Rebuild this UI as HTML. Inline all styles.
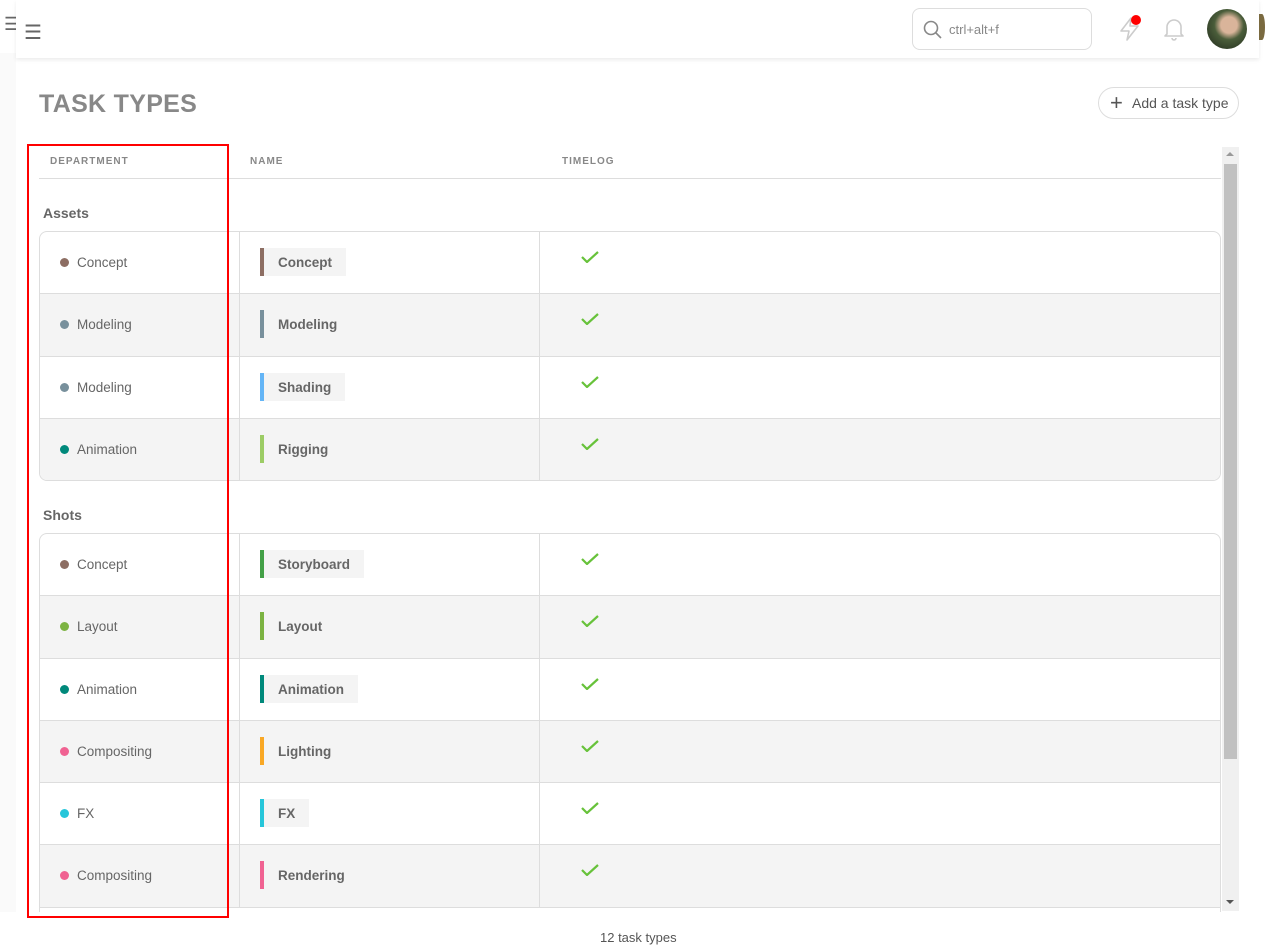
<!DOCTYPE html>
<html><head><meta charset="utf-8"><style>
*{box-sizing:border-box;margin:0;padding:0}
body{width:1275px;height:948px;overflow:hidden;background:#fff;font-family:"Liberation Sans",sans-serif;position:relative;color:#666}
.side{position:absolute;top:0;width:16px;height:948px;background:#fafafa}
.top{position:absolute;left:16px;top:0;width:1243px;height:58px;background:#fff;box-shadow:0 2px 4px rgba(0,0,0,.08)}
.ham{position:absolute;font-size:20px;color:#666}
.search{position:absolute;left:912px;top:8px;width:180px;height:42px;border:1px solid #ddd;border-radius:8px}
.search span{position:absolute;left:36px;top:13px;font-size:13px;color:#888}
h1{position:absolute;left:39px;top:90px;font-size:25px;font-weight:bold;color:#888;letter-spacing:0.3px}
.btn{position:absolute;left:1098px;top:87px;width:141px;height:32px;border:1px solid #ddd;border-radius:16px;font-size:14px;color:#555;padding:7px 0 0 33px}
.btn:before{content:"+";position:absolute;left:11px;top:2px;font-size:22px;color:#555}
.th{position:absolute;top:156px;font-size:10px;font-weight:bold;letter-spacing:1px;color:#888}
.hl{position:absolute;left:39px;top:178px;width:1182px;height:1px;background:#ddd}
.grp{position:absolute;left:43px;font-size:14px;font-weight:bold;color:#666}
.box{position:absolute;left:39px;width:1182px;border:1px solid #ddd;border-radius:8px;overflow:hidden}
.row{height:62.3px;border-bottom:1px solid #ddd;position:relative}
.row:last-child{border-bottom:none}
.row.g{background:#f4f4f4}
.c1,.c2{position:absolute;top:0;height:100%;border-right:1px solid #ddd}
.c1{left:0;width:200px}.c2{left:200px;width:300px}
.dot{position:absolute;left:20px;top:26px;width:9px;height:9px;border-radius:50%}
.dn{position:absolute;left:37px;top:23px;font-size:13.5px;color:#666}
.tag{position:absolute;left:20px;top:16px;height:28px;background:#f4f4f4;border-left:4px solid;font-size:13.5px;font-weight:bold;color:#666;padding:7px 14px 0}
.chk{position:absolute;left:541px;top:19px;width:18px;height:12px}
.sb{position:absolute;left:1222px;top:147px;width:17px;height:764px;background:#f0f0f0}
.red{position:absolute;left:27px;top:144px;width:202px;height:774px;border:2px solid #f00}
</style></head><body>
<div class="side" style="left:0"><div style="height:53px;background:#fff"></div></div>
<div class="side" style="left:1259px;background:#fff"></div>
<div class="ham" style="left:4px;top:14px;font-size:18px">☰</div>
<div class="top"></div>
<div class="ham" style="left:24px;top:20px">☰</div>
<div class="search"><svg style="position:absolute;left:10px;top:11px" width="20" height="20" viewBox="0 0 20 20"><circle cx="8" cy="8" r="6.5" fill="none" stroke="#888" stroke-width="1.6"/><line x1="13" y1="13" x2="18" y2="18" stroke="#888" stroke-width="1.6"/></svg><span>ctrl+alt+f</span></div>
<svg style="position:absolute;left:1118px;top:16px" width="24" height="26" viewBox="0 0 24 26"><path d="M13 2 L3 15 H11 L9 24 L20 10 H12 Z" fill="none" stroke="#ccc" stroke-width="1.6" stroke-linejoin="round"/></svg>
<div style="position:absolute;left:1131px;top:15px;width:10px;height:10px;border-radius:50%;background:#f00"></div>
<svg style="position:absolute;left:1163px;top:17px" width="22" height="24" viewBox="0 0 22 24"><path d="M4 17 V10 a7 7 0 0 1 14 0 V17 L20 19 H2 Z" fill="none" stroke="#ccc" stroke-width="1.6" stroke-linejoin="round"/><path d="M9 21 a2 2 0 0 0 4 0" fill="none" stroke="#ccc" stroke-width="1.6"/></svg>
<div style="position:absolute;left:1207px;top:9px;width:40px;height:40px;border-radius:50%;background:radial-gradient(circle at 55% 40%,#d9b49a 0 25%,#4a5d3a 45%,#2e3a25 80%)"></div>
<div style="position:absolute;left:1259px;top:14px;width:6px;height:26px;border-radius:0 50% 50% 0;background:#7a6a40"></div>
<h1>TASK TYPES</h1>
<div class="btn">Add a task type</div>
<div class="th" style="left:50px">DEPARTMENT</div>
<div class="th" style="left:250px">NAME</div>
<div class="th" style="left:562px">TIMELOG</div>
<div class="hl"></div>
<div class="grp" style="top:205px">Assets</div>
<div class="box" style="top:231px;height:250px">
<div class="row"><div class="c1"><div class="dot" style="background:#8d6e63"></div><div class="dn">Concept</div></div><div class="c2"><div class="tag" style="border-color:#8d6e63">Concept</div></div><svg class="chk" viewBox="0 0 18 12"><path d="M1 6 L6 11 L17 1" fill="none" stroke="#67c23a" stroke-width="2.2"/></svg></div>
<div class="row g"><div class="c1"><div class="dot" style="background:#78909c"></div><div class="dn">Modeling</div></div><div class="c2"><div class="tag" style="border-color:#78909c">Modeling</div></div><svg class="chk" viewBox="0 0 18 12"><path d="M1 6 L6 11 L17 1" fill="none" stroke="#67c23a" stroke-width="2.2"/></svg></div>
<div class="row"><div class="c1"><div class="dot" style="background:#78909c"></div><div class="dn">Modeling</div></div><div class="c2"><div class="tag" style="border-color:#64b5f6">Shading</div></div><svg class="chk" viewBox="0 0 18 12"><path d="M1 6 L6 11 L17 1" fill="none" stroke="#67c23a" stroke-width="2.2"/></svg></div>
<div class="row g"><div class="c1"><div class="dot" style="background:#00897b"></div><div class="dn">Animation</div></div><div class="c2"><div class="tag" style="border-color:#9ccc65">Rigging</div></div><svg class="chk" viewBox="0 0 18 12"><path d="M1 6 L6 11 L17 1" fill="none" stroke="#67c23a" stroke-width="2.2"/></svg></div>
</div>
<div class="grp" style="top:507px">Shots</div>
<div class="box" style="top:533px;height:400px;border-bottom:none;border-radius:8px 8px 0 0">
<div class="row"><div class="c1"><div class="dot" style="background:#8d6e63"></div><div class="dn">Concept</div></div><div class="c2"><div class="tag" style="border-color:#43a047">Storyboard</div></div><svg class="chk" viewBox="0 0 18 12"><path d="M1 6 L6 11 L17 1" fill="none" stroke="#67c23a" stroke-width="2.2"/></svg></div>
<div class="row g"><div class="c1"><div class="dot" style="background:#7cb342"></div><div class="dn">Layout</div></div><div class="c2"><div class="tag" style="border-color:#7cb342">Layout</div></div><svg class="chk" viewBox="0 0 18 12"><path d="M1 6 L6 11 L17 1" fill="none" stroke="#67c23a" stroke-width="2.2"/></svg></div>
<div class="row"><div class="c1"><div class="dot" style="background:#00897b"></div><div class="dn">Animation</div></div><div class="c2"><div class="tag" style="border-color:#00897b">Animation</div></div><svg class="chk" viewBox="0 0 18 12"><path d="M1 6 L6 11 L17 1" fill="none" stroke="#67c23a" stroke-width="2.2"/></svg></div>
<div class="row g"><div class="c1"><div class="dot" style="background:#f06292"></div><div class="dn">Compositing</div></div><div class="c2"><div class="tag" style="border-color:#f9a825">Lighting</div></div><svg class="chk" viewBox="0 0 18 12"><path d="M1 6 L6 11 L17 1" fill="none" stroke="#67c23a" stroke-width="2.2"/></svg></div>
<div class="row"><div class="c1"><div class="dot" style="background:#26c6da"></div><div class="dn">FX</div></div><div class="c2"><div class="tag" style="border-color:#26c6da">FX</div></div><svg class="chk" viewBox="0 0 18 12"><path d="M1 6 L6 11 L17 1" fill="none" stroke="#67c23a" stroke-width="2.2"/></svg></div>
<div class="row g" style="border-bottom:1px solid #ddd"><div class="c1"><div class="dot" style="background:#f06292"></div><div class="dn">Compositing</div></div><div class="c2"><div class="tag" style="border-color:#f06292">Rendering</div></div><svg class="chk" viewBox="0 0 18 12"><path d="M1 6 L6 11 L17 1" fill="none" stroke="#67c23a" stroke-width="2.2"/></svg></div>
</div>
<div style="position:absolute;left:0;top:912px;width:1275px;height:36px;background:#fff"></div>
<div class="sb"><div style="position:absolute;left:2px;top:17px;width:13px;height:595px;background:#c1c1c1"></div>
<div style="position:absolute;left:4px;top:5px;border:4px solid transparent;border-bottom:4px solid #999;border-top:none"></div>
<div style="position:absolute;left:4px;top:753px;border:4px solid transparent;border-top:4px solid #555;border-bottom:none"></div></div>
<div style="position:absolute;left:600px;top:930px;font-size:13px;color:#555">12 task types</div>
<div class="red"></div>
</body></html>
